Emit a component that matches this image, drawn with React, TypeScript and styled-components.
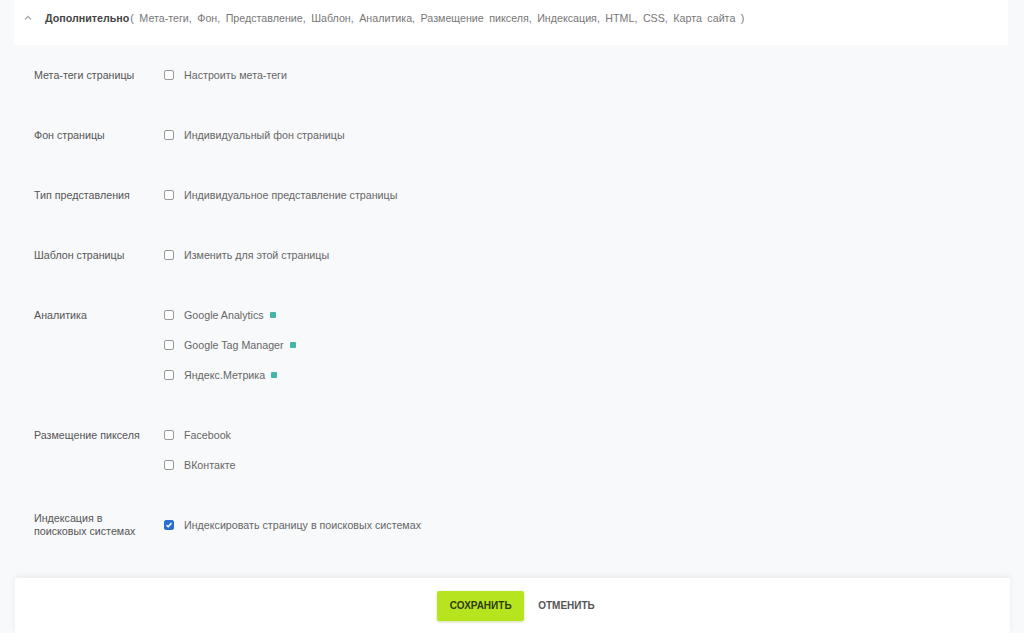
import React from 'react';
import styled, { createGlobalStyle } from 'styled-components';

const GlobalStyle = createGlobalStyle`
  html, body, #root {
    margin: 0;
    height: 100%;
  }
  body {
    background: #f8f9fb;
    font-family: 'Liberation Sans', Arial, sans-serif;
    overflow: hidden;
  }
`;

const Page = styled.div`
  height: 100vh;
  display: flex;
  flex-direction: column;
`;

const Header = styled.div`
  flex: 0 0 auto;
  height: 45px;
  box-sizing: border-box;
  margin: 0 16px 0 14px;
  padding: 11px 0 0 10px;
  background: #ffffff;
  display: flex;
  align-items: flex-start;
  font-size: 10.7px;
  line-height: 14px;
  color: #666;
`;

const Chevron = styled.svg`
  width: 8px;
  height: 8px;
  margin: 3px 13px 0 0;
  flex: 0 0 auto;
`;

const HeaderTitle = styled.span`
  font-weight: bold;
  color: #444;
  margin-right: 1px;
`;

const HeaderLinks = styled.span`
  color: #777;
  word-spacing: 2.5px;
`;

const Content = styled.div`
  flex: 1 1 auto;
  overflow: hidden;
  padding: 15px 0 0 34px;
`;

const Group = styled.div`
  display: grid;
  grid-template-columns: 130px 1fr;
  margin-bottom: 30px;
`;

const Label = styled.div`
  align-self: start;
  min-height: 30px;
  display: flex;
  align-items: center;
  font-size: 10.7px;
  line-height: 13px;
  color: #555;
  padding-right: 10px;
`;

const Items = styled.div`
  display: flex;
  flex-direction: column;
`;

const Item = styled.label`
  height: 30px;
  display: flex;
  align-items: center;
  font-size: 10.7px;
  color: #666;
`;

const Box = styled.span<{ $checked?: boolean }>`
  width: 10px;
  height: 10px;
  box-sizing: border-box;
  border-radius: 2px;
  border: 1px solid ${({ $checked }) => ($checked ? '#2c6fd1' : '#9a9a9a')};
  background: ${({ $checked }) => ($checked ? '#2c6fd1' : '#fff')};
  margin-right: 10px;
  display: flex;
  align-items: center;
  justify-content: center;
`;

const Tag = styled.span`
  width: 6px;
  height: 6px;
  margin-left: 6px;
  background: #45b5a9;
  border-radius: 1px;
`;

const Footer = styled.div`
  flex: 0 0 55px;
  margin: 0 14px 0 15px;
  background: #ffffff;
  box-shadow: 0 -2px 6px rgba(0, 0, 0, 0.06);
  display: flex;
  align-items: center;
  justify-content: center;
  gap: 14px;
  padding-left: 7px;
  position: relative;
`;

const SaveButton = styled.button`
  width: 87px;
  height: 30px;
  border: none;
  border-radius: 2px;
  background: #b6e51f;
  box-shadow: 0 1px 3px rgba(120, 160, 0, 0.35);
  font-family: 'Liberation Sans', Arial, sans-serif;
  font-size: 10px;
  font-weight: bold;
  color: #2e3a0c;
  text-transform: uppercase;
  cursor: pointer;
`;

const CancelButton = styled.button`
  border: none;
  background: none;
  padding: 0;
  font-family: 'Liberation Sans', Arial, sans-serif;
  font-size: 10px;
  font-weight: bold;
  color: #555;
  text-transform: uppercase;
  cursor: pointer;
`;

type Option = { text: string; checked?: boolean; tag?: boolean };
type Section = { label: string; options: Option[] };

const sections: Section[] = [
  { label: 'Мета-теги страницы', options: [{ text: 'Настроить мета-теги' }] },
  { label: 'Фон страницы', options: [{ text: 'Индивидуальный фон страницы' }] },
  { label: 'Тип представления', options: [{ text: 'Индивидуальное представление страницы' }] },
  { label: 'Шаблон страницы', options: [{ text: 'Изменить для этой страницы' }] },
  {
    label: 'Аналитика',
    options: [
      { text: 'Google Analytics', tag: true },
      { text: 'Google Tag Manager', tag: true },
      { text: 'Яндекс.Метрика', tag: true },
    ],
  },
  { label: 'Размещение пикселя', options: [{ text: 'Facebook' }, { text: 'ВКонтакте' }] },
  {
    label: 'Индексация в поисковых системах',
    options: [{ text: 'Индексировать страницу в поисковых системах', checked: true }],
  },
  { label: 'Код HTML', options: [{ text: 'Добавить HTML-код на страницу' }] },
];

const Check = () => (
  <svg width="8" height="8" viewBox="0 0 8 8">
    <path d="M1.5 4.2 L3.2 5.8 L6.5 2" fill="none" stroke="#fff" strokeWidth="1.4" />
  </svg>
);

export default function App() {
  return (
    <Page>
      <GlobalStyle />
      <Header>
        <Chevron viewBox="0 0 8 8">
          <path d="M1 5.5 L4 2.5 L7 5.5" fill="none" stroke="#aaa" strokeWidth="1.3" />
        </Chevron>
        <HeaderTitle>Дополнительно</HeaderTitle>
        <HeaderLinks>
          ( Мета-теги, Фон, Представление, Шаблон, Аналитика, Размещение пикселя, Индексация, HTML, CSS, Карта сайта )
        </HeaderLinks>
      </Header>
      <Content>
        {sections.map((s) => (
          <Group key={s.label}>
            <Label>{s.label}</Label>
            <Items>
              {s.options.map((o) => (
                <Item key={o.text}>
                  <Box $checked={o.checked}>{o.checked && <Check />}</Box>
                  {o.text}
                  {o.tag && <Tag />}
                </Item>
              ))}
            </Items>
          </Group>
        ))}
      </Content>
      <Footer>
        <SaveButton>Сохранить</SaveButton>
        <CancelButton>Отменить</CancelButton>
      </Footer>
    </Page>
  );
}
